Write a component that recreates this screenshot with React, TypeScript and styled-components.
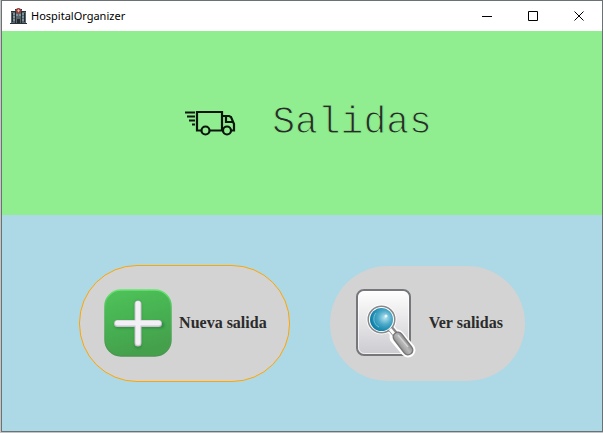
import React from "react";
import styled, { createGlobalStyle } from "styled-components";

const GlobalStyle = createGlobalStyle`
  * { box-sizing: border-box; }
  html, body, #root { height: 100%; }
  body { margin: 0; background: #c4c4c4; }
`;

const Window = styled.main`
  display: flex;
  flex-direction: column;
  height: calc(100% - 1px);
  margin: 0 0 0 1px;
  border: 1px solid #6b7275;
  background: #add8e6;
`;

const TitleBar = styled.header`
  display: flex;
  align-items: center;
  flex: none;
  height: 30px;
  padding-left: 8px;
  background: #fff;
`;

const AppName = styled.span`
  flex: 1;
  margin-left: 4px;
  font: 11px/16px "Noto Sans", "Open Sans", sans-serif;
  color: #000;
`;

const CaptionButton = styled.button`
  display: flex;
  align-items: center;
  justify-content: center;
  width: 46px;
  height: 100%;
  padding: 0;
  border: 0;
  background: transparent;
`;

const Banner = styled.section`
  display: flex;
  align-items: center;
  justify-content: center;
  gap: 36px;
  flex: 184 0 0;
  padding-left: 12px;
  background: #90ee90;
`;

const Heading = styled.h1`
  margin: 0;
  font: 400 38px/44px "Liberation Mono", "Courier New", monospace;
  color: #2a2a2a;
  -webkit-text-stroke: 1px #90ee90;
`;

const Actions = styled.nav`
  display: flex;
  align-items: center;
  justify-content: center;
  gap: 40px;
  flex: 216 0 0;
  background: #add8e6;
`;

const ActionButton = styled.button<{ $outlined?: boolean }>`
  display: flex;
  align-items: center;
  gap: 6px;
  padding: 22px 22px 22px 24px;
  border: ${(p) => (p.$outlined ? "1px solid #ffa500" : "0")};
  border-radius: 58px;
  background: #d3d3d3;
  color: #2b2b2b;
  font: 700 16px/20px "Liberation Serif", "Times New Roman", serif;
  white-space: nowrap;
`;

const HospitalIcon = () => (
  <svg width="17" height="17" viewBox="0 0 17 17" aria-hidden="true">
    <path d="M1 4h4V2h7v2h4v11H1z" fill="#59666b" />
    <path d="M1 3.500h4M12 3.500h4M5 1.500h7M0 15.500h17" stroke="#29343a" />
    <path d="M2.500 5v9M5.500 3v12M11.500 3v12M14.500 5v9" stroke="#252d31" />
    <path d="M4 5v9M13 5v9M7 6v3M10 6v3" stroke="#a5c3cf" strokeDasharray="2 1" />
    <path d="M7 11h3v4H7z" fill="#252b2e" />
    <circle cx="8.500" cy="2.700" r="2.700" fill="#963c38" />
    <path d="M8.500 1.200v3M7 2.700h3" stroke="#e6c4bd" strokeWidth=".8" />
  </svg>
);

const TruckIcon = () => (
  <svg width="52" height="26" viewBox="0 0 52 26" fill="none" stroke="#0b160b" strokeWidth="2.200" aria-hidden="true">
    <path d="M1 2.500h10M3 6.500h8M5 10.500h6M8 14.500h3" />
    <path d="M17 20.500h-4V2h25v18.500H26" />
    <path d="M38 6h7l2 1 3 7v6.500h-3M38 20.500h1" />
    <path d="M42 6v6h7" />
    <circle cx="21.500" cy="20.500" r="4" />
    <circle cx="43" cy="20.500" r="4" />
  </svg>
);

const PlusIcon = () => (
  <svg width="69" height="71" viewBox="0 0 69 71" aria-hidden="true">
    <defs>
      <linearGradient id="plusFill" x1="0" y1="0" x2=".3" y2="1">
        <stop offset="0" stopColor="#4fc35a" />
        <stop offset=".6" stopColor="#46af51" />
        <stop offset="1" stopColor="#45a04c" />
      </linearGradient>
      <linearGradient id="plusRim" x1="0" y1="0" x2="0" y2="1">
        <stop offset="0" stopColor="#65e670" />
        <stop offset=".3" stopColor="#4eb858" />
        <stop offset="1" stopColor="#4a954e" />
      </linearGradient>
      <filter id="plusShadow" x="-30%" y="-30%" width="160%" height="160%">
        <feGaussianBlur stdDeviation="1.300" />
      </filter>
    </defs>
    <rect x="1" y="2" width="66" height="66" rx="16" fill="url(#plusFill)" stroke="url(#plusRim)" strokeWidth="1.500" />
    <path d="M34 16v41M14 37h43" stroke="#267c37" strokeWidth="7" strokeLinecap="round" opacity=".6" filter="url(#plusShadow)" />
    <path d="M34 16v39M13.500 35.500h41" stroke="#c9c3d0" strokeWidth="7" strokeLinecap="round" />
    <path d="M34 15.500v39M13.500 35h41" stroke="#f2eff5" strokeWidth="5" strokeLinecap="round" />
  </svg>
);

const SearchPageIcon = () => (
  <svg width="69" height="71" viewBox="0 0 69 71" aria-hidden="true">
    <defs>
      <linearGradient id="pageFill" x1="0" y1="0" x2="0" y2="1">
        <stop offset="0" stopColor="#fff" />
        <stop offset="1" stopColor="#cbcbd0" />
      </linearGradient>
      <radialGradient id="lensFill" cx=".65" cy=".42" r=".65">
        <stop offset="0" stopColor="#b9e4f1" />
        <stop offset=".45" stopColor="#4eabc9" />
        <stop offset="1" stopColor="#087ba5" />
      </radialGradient>
      <linearGradient id="handleFill" x1="0" y1="1" x2="1" y2="0">
        <stop offset="0" stopColor="#777" />
        <stop offset=".5" stopColor="#b8b8b8" />
        <stop offset="1" stopColor="#777" />
      </linearGradient>
    </defs>
    <rect x="3" y="2" width="53" height="65" rx="7" fill="url(#pageFill)" stroke="#75777a" strokeWidth="2" />
    <rect x="4.500" y="3.500" width="50" height="62" rx="6" fill="none" stroke="#fff" strokeOpacity=".7" />
    <path d="M36 40l5 6" stroke="#fff" strokeWidth="9" />
    <path d="M43 49l11 13" stroke="#fff" strokeWidth="15" strokeLinecap="round" />
    <circle cx="27.500" cy="31.500" r="15" fill="#fff" />
    <circle cx="27.500" cy="31.500" r="13.300" fill="#fff" stroke="#88898b" strokeWidth="1.500" />
    <path d="M37 41l5 6" stroke="#888" strokeWidth="6" />
    <path d="M36 41l5 6" stroke="#fff" strokeWidth="3" />
    <path d="M44 49l10 13" stroke="#777" strokeWidth="11" strokeLinecap="round" />
    <path d="M44 49l10 13" stroke="url(#handleFill)" strokeWidth="8" strokeLinecap="round" />
    <path d="M44 47l10 12" stroke="#d4d4d4" strokeWidth="1.500" />
    <circle cx="27.500" cy="31.500" r="11.500" fill="url(#lensFill)" />
    <path d="M22 25a9 9 0 0 0 3 14" fill="none" stroke="#6fc0d8" strokeWidth="1" />
    <circle cx="32" cy="28" r="1.500" fill="#fff" opacity=".8" />
  </svg>
);

const captions = [
  { label: "Minimizar", path: "M0 5.500h10" },
  { label: "Maximizar", path: "M.5.5h9v9h-9z" },
  { label: "Cerrar", path: "M.5.5l9 9M9.500.5l-9 9" },
];

export default function App() {
  return (
    <>
      <GlobalStyle />
      <Window>
        <TitleBar>
          <HospitalIcon />
          <AppName>HospitalOrganizer</AppName>
          {captions.map(({ label, path }) => (
            <CaptionButton key={label} type="button" aria-label={label}>
              <svg width="10" height="10" viewBox="0 0 10 10" fill="none" stroke="#000">
                <path d={path} />
              </svg>
            </CaptionButton>
          ))}
        </TitleBar>
        <Banner>
          <TruckIcon />
          <Heading>Salidas</Heading>
        </Banner>
        <Actions>
          <ActionButton type="button" $outlined>
            <PlusIcon />
            Nueva salida
          </ActionButton>
          <ActionButton type="button">
            <SearchPageIcon />
            Ver salidas
          </ActionButton>
        </Actions>
      </Window>
    </>
  );
}
